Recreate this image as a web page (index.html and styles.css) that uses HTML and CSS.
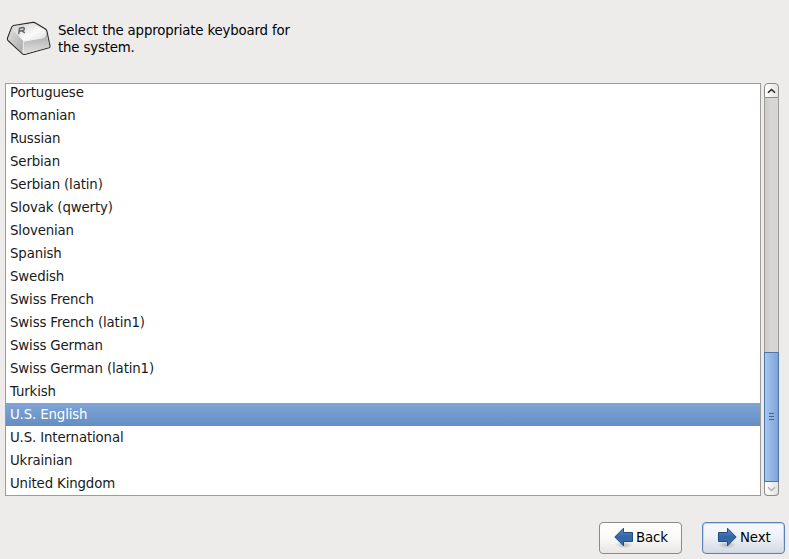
FILE: index.html
```html
<!DOCTYPE html>
<html lang="en">
<head>
<meta charset="utf-8">
<title>Keyboard</title>
<link rel="stylesheet" href="styles.css">
</head>
<body>
<header class="header">
  <svg class="key" width="46" height="36" viewBox="0 0 46 36">
    <defs>
      <linearGradient id="top" x1="0" y1="0" x2="1" y2="1"><stop offset="0" stop-color="#cdcdcd"/><stop offset=".6" stop-color="#fafafa"/><stop offset="1" stop-color="#dcdcdc"/></linearGradient>
      <linearGradient id="front" x1="0" y1="0" x2="0" y2="1"><stop offset="0" stop-color="#a8a8a8"/><stop offset="1" stop-color="#e2e2e2"/></linearGradient>
      <linearGradient id="side" x1="0" y1="0" x2="1" y2="1"><stop offset="0" stop-color="#e0e0e0"/><stop offset="1" stop-color="#a8a8a8"/></linearGradient>
    </defs>
    <path d="M1.500 17L5.800 6Q6.200 4.800 7.500 4.500L26.800 1.400Q28.300 1.200 29.500 1.900L39.500 8Q40.500 8.700 40.900 10L44 25Q44.200 26.300 43 26.700L18.800 33.500Q17.300 33.800 16.200 32.700L2 19.500Q1 18.500 1.500 17Z" fill="#dcdcdc" stroke="#2a2a2a" stroke-width="1.100" stroke-linejoin="round"/>
    <path d="M6.300 7L2.200 18.500L16.500 32L17.500 20.500Z" fill="url(#side)"/>
    <path d="M7 5.500L27.300 2.200L39.500 9.500L40 16L18 20.500L6.200 8Z" fill="url(#top)"/>
    <path d="M17.700 20.500L38 16.800Q40 16.300 40.300 12L43.300 26L18 32.900L16.900 32Z" fill="url(#front)"/>
    <path d="M17.500 20.300L17 31.500M17.500 20.300L38 16.700" fill="none" stroke="#f2f2f2" stroke-width=".8"/>
    <path d="M12.600 13.200L13.600 7.200L17 6.600Q19.300 7 17.800 9.200L13.600 10.200M16.200 9.800L18.800 11.800" fill="none" stroke="#666" stroke-width="1.500"/>
  </svg>
  <h1 class="title">Select the appropriate keyboard for<br>the system.</h1>
</header>
<main class="chooser">
  <ul class="list">
    <li>Portuguese</li><li>Romanian</li><li>Russian</li><li>Serbian</li><li>Serbian (latin)</li><li>Slovak (qwerty)</li><li>Slovenian</li><li>Spanish</li><li>Swedish</li><li>Swiss French</li><li>Swiss French (latin1)</li><li>Swiss German</li><li>Swiss German (latin1)</li><li>Turkish</li><li class="selected">U.S. English</li><li>U.S. International</li><li>Ukrainian</li><li>United Kingdom</li>
  </ul>
  <div class="scrollbar">
    <div class="step up"><svg width="9" height="6" viewBox="0 0 9 6"><path d="M1 4.700L4.500 1.500L8 4.700" fill="none" stroke="#222" stroke-width="1.500"/></svg></div>
    <div class="trough"></div>
    <div class="thumb"><i></i><i></i><i></i></div>
    <div class="step down"><svg width="9" height="6" viewBox="0 0 9 6"><path d="M1 1.300L4.500 4.500L8 1.300" fill="none" stroke="#b0afad" stroke-width="1.300"/></svg></div>
  </div>
</main>
<footer class="actions">
  <button class="button">
    <svg width="20" height="22" viewBox="0 0 20 22"><defs><linearGradient id="arrow" x1="0" y1="0" x2="0" y2="1"><stop offset="0" stop-color="#5f8fc8"/><stop offset=".5" stop-color="#3465a4"/><stop offset="1" stop-color="#3b6fb2"/></linearGradient><radialGradient id="shade"><stop offset="0" stop-opacity=".22"/><stop offset="1" stop-opacity="0"/></radialGradient></defs><ellipse cx="10" cy="18" rx="9" ry="3.500" fill="url(#shade)"/><path d="M.8 10L9.500 1.200V5.500H18.500V14.500H9.500V18.800Z" fill="url(#arrow)" stroke="#204a87" stroke-linejoin="round"/></svg>
    <span>Back</span>
  </button>
  <button class="button default">
    <svg width="20" height="22" viewBox="0 0 20 22"><ellipse cx="9" cy="18" rx="9" ry="3.500" fill="url(#shade)"/><path d="M18.200 10L9.500 1.200V5.500H.5V14.500H9.500V18.800Z" fill="url(#arrow)" stroke="#204a87" stroke-linejoin="round"/></svg>
    <span>Next</span>
  </button>
</footer>
</body>
</html>
```
FILE: styles.css
```css
* { box-sizing: border-box; }
body {
  margin: 0;
  height: 559px;
  overflow: hidden;
  background: #edeceb;
  color: #000;
  font: 13.33px/17px "DejaVu Sans", sans-serif;
  display: flex;
  flex-direction: column;
}
.header {
  height: 83px;
  padding: 21px 0 0 6px;
  display: flex;
  align-items: flex-start;
  gap: 6px;
}
.key { display: block; }
.title { margin: 1px 0 0; font-size: inherit; font-weight: normal; letter-spacing: -0.17px; }
.chooser {
  height: 413px;
  padding: 0 10px 0 5px;
  display: flex;
  gap: 3px;
}
.list {
  flex: 1;
  margin: 0;
  padding: 0;
  list-style: none;
  background: #fff;
  border: 1px solid #9d9c9a;
  color: #1a1a1a;
  letter-spacing: -0.14px;
  overflow: hidden;
  display: flex;
  flex-direction: column;
  justify-content: flex-end;
}
.list li { flex: none; height: 23px; line-height: 23px; padding-left: 4px; }
.list .selected {
  background: linear-gradient(#80a5d7, #638dc3);
  color: #fff;
}
.scrollbar { width: 15px; display: flex; flex-direction: column; }
.step {
  border: 1px solid #8c8b88;
  background: linear-gradient(90deg, #fff, #e4e3e1);
  display: flex;
  align-items: center;
  justify-content: center;
}
.up { height: 15px; border-radius: 4px 4px 0 0; }
.down { height: 14px; border-top: 0; border-radius: 0 0 4px 4px; }
.trough {
  flex: 1;
  border: solid #9d9c9a;
  border-width: 0 1px;
  background: linear-gradient(90deg, #cbcac8, #d7d6d4 40%);
}
.thumb {
  height: 130px;
  padding-bottom: 2px;
  border: 1px solid #4f76a8;
  background: linear-gradient(90deg, #a6c5ee, #7ea4d8);
  display: flex;
  flex-direction: column;
  align-items: center;
  justify-content: center;
  gap: 2px;
}
.thumb i { width: 5px; height: 1px; background: #3d6496; }
.actions {
  margin-top: 26px;
  padding-right: 4px;
  display: flex;
  justify-content: flex-end;
  gap: 20px;
}
.button {
  width: 83px;
  height: 32px;
  padding: 0 0 0 14px;
  border: 1px solid #8c8b88;
  border-radius: 4px;
  background: linear-gradient(#fff, #f9f9f8 50%, #e7e6e4);
  color: #000;
  font: inherit;
  letter-spacing: -0.1px;
  display: flex;
  align-items: center;
  gap: 2px;
}
.button svg { flex: none; }
.button span { margin-top: -2px; }
.default {
  padding-left: 15px;
  border-color: #5b82b5;
  background: linear-gradient(#f8faff, #eef1f6 45%, #d5dae1);
  box-shadow: inset 0 0 0 1px #c5d6ed;
}
```
